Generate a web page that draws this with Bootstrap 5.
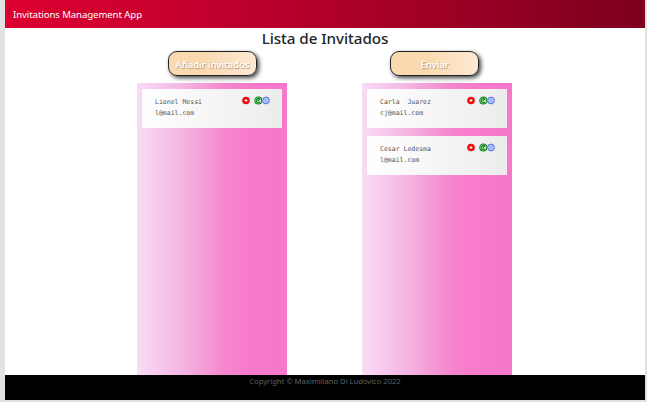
<!DOCTYPE html>
<html lang="es">
<head>
<meta charset="utf-8">
<meta name="viewport" content="width=device-width, initial-scale=1">
<title>Invitations Management App</title>
<link href="https://cdn.jsdelivr.net/npm/bootstrap@5.3.0/dist/css/bootstrap.min.css" rel="stylesheet">
<style>
body { background: #e2e2e2; font-family: "Noto Sans", "Open Sans", sans-serif; height: 402px; }
.app-shell { width: 640px; height: 400px; margin-left: 5px; background: #fff; }
.top-bar { height: 28px; padding: 1px 8px 0; background: linear-gradient(90deg, #dc0030 0%, #c9002f 25%, #7d001e 100%); }
.top-bar .navbar-brand { font-size: 9.6px; line-height: 14px; letter-spacing: -.08px; color: #fff; padding: 0; }
.page-title { font-size: 15.2px; line-height: 20px; height: 23px; font-weight: 500; letter-spacing: -.06px; color: #212529; }
.lists { column-gap: 75px; height: 324px; padding-right: 1px; }
.guest-col { width: 150px; }
.action-btn { width: 89px; height: 25px; padding: 3px 0 0; margin: 0 0 7px 31px; border: 1px solid #222; border-radius: 9px; background: linear-gradient(90deg, #fad9b0 40%, #fde9d3); box-shadow: 2px 2px 4px rgba(0,0,0,.75); color: #fff; font-size: 9.7px; line-height: 18px; text-shadow: 1px 1px 1px rgba(80,60,40,.5); -webkit-text-stroke: .2px #fff; white-space: nowrap; }
.action-send { margin-left: 28px; }
.guest-list { padding: 6px 5px; gap: 8px; background: linear-gradient(90deg, #f9dcf6 0%, #f4b5e2 30%, #f684cb 60%, #f978cd 80%, #f578ca 100%); }
.guest { height: 39px; padding: 7px 12px 0 13px; border-radius: 1px; background: linear-gradient(90deg, #fff, #ececec); }
.guest-text { font-family: "DejaVu Sans Mono", monospace; font-size: 6.5px; line-height: 10.6px; color: #555; white-space: pre; padding-top: 1px; }
.guest-icons { width: 28px; height: 9px; }
.bottom-bar { height: 25px; background: #000; color: #5c6166; font-size: 7.7px; line-height: 13px; letter-spacing: -.05px; }
</style>
</head>
<body class="overflow-hidden">
<svg class="d-none">
  <symbol id="guest-actions" viewBox="0 0 28 9">
    <circle cx="4" cy="4.5" r="3.8" fill="#f00c10"/>
    <path d="M4 3v3M2.5 4.5h3" stroke="#fff" stroke-width=".9"/>
    <circle cx="16.3" cy="4.5" r="3.5" fill="#d9f0d9" stroke="#0b8418" stroke-width="1.1"/>
    <path d="M18 3.2a2.1 2.1 0 1 0 0 2.7M15.7 5.1l2.5-2.4" fill="none" stroke="#0b8418" stroke-width="1.2"/>
    <circle cx="24" cy="4.5" r="3.4" fill="#b5c5f7" stroke="#5270e8" stroke-width="1"/>
    <path d="M22.6 3.5h2.8M22.6 5.5h2.8" stroke="#8ca2ef" stroke-width=".6"/>
  </symbol>
</svg>
<div class="app-shell d-flex flex-column">
  <nav class="navbar top-bar"><span class="navbar-brand m-0">Invitations Management App</span></nav>
  <h1 class="page-title text-center m-0">Lista de Invitados</h1>
  <main class="lists d-flex justify-content-center">
    <section class="guest-col d-flex flex-column">
      <button class="btn action-btn d-block flex-shrink-0">Añadir invitados</button>
      <div class="guest-list d-flex flex-column flex-grow-1">
        <div class="guest d-flex justify-content-between"><div class="guest-text">Lionel Messi
l@mail.com</div><svg class="guest-icons"><use href="#guest-actions"/></svg></div>
      </div>
    </section>
    <section class="guest-col d-flex flex-column">
      <button class="btn action-btn action-send d-block flex-shrink-0">Enviar</button>
      <div class="guest-list d-flex flex-column flex-grow-1">
        <div class="guest d-flex justify-content-between"><div class="guest-text">Carla  Juarez
cj@mail.com</div><svg class="guest-icons"><use href="#guest-actions"/></svg></div>
        <div class="guest d-flex justify-content-between"><div class="guest-text">Cesar Ledesma
l@mail.com</div><svg class="guest-icons"><use href="#guest-actions"/></svg></div>
      </div>
    </section>
  </main>
  <footer class="bottom-bar text-center flex-shrink-0">Copyright © Maximiliano Di Ludovico 2022</footer>
</div>
<script src="https://cdn.jsdelivr.net/npm/bootstrap@5.3.0/dist/js/bootstrap.bundle.min.js"></script>
</body>
</html>
